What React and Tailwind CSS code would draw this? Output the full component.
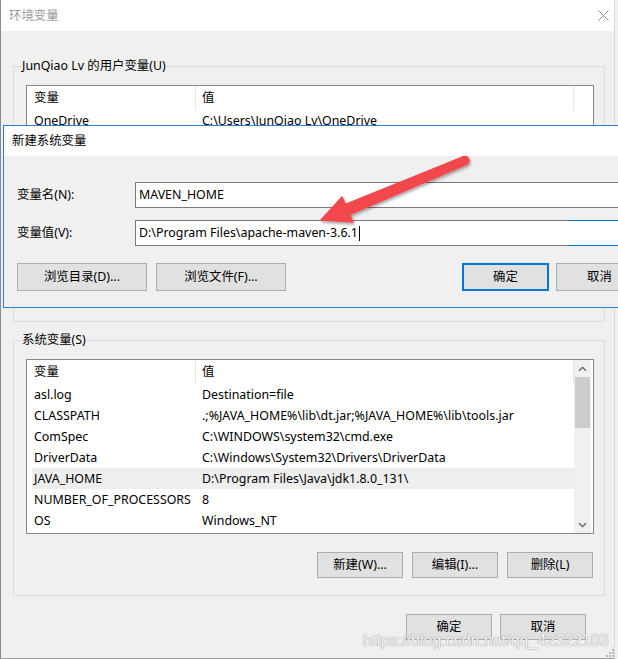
import React from "react";

const userVars = [
  ["OneDrive", "C:\\Users\\JunQiao Lv\\OneDrive"],
  ["Path", "C:\\Users\\JunQiao Lv\\AppData\\Local\\Microsoft\\WindowsApps;"],
  ["TEMP", "C:\\Users\\JunQiao Lv\\AppData\\Local\\Temp"],
  ["TMP", "C:\\Users\\JunQiao Lv\\AppData\\Local\\Temp"],
];

const sysVars = [
  ["asl.log", "Destination=file"],
  ["CLASSPATH", ".;%JAVA_HOME%\\lib\\dt.jar;%JAVA_HOME%\\lib\\tools.jar"],
  ["ComSpec", "C:\\WINDOWS\\system32\\cmd.exe"],
  ["DriverData", "C:\\Windows\\System32\\Drivers\\DriverData"],
  ["JAVA_HOME", "D:\\Program Files\\Java\\jdk1.8.0_131\\"],
  ["NUMBER_OF_PROCESSORS", "8"],
  ["OS", "Windows_NT"],
];

function Btn({ children, className = "" }) {
  return (
    <button
      type="button"
      className={
        "flex items-center justify-center bg-[#e1e1e1] text-[12.4px] leading-[16px] text-black shrink-0 " +
        className
      }
    >
      {children}
    </button>
  );
}

function Chevron({ down }) {
  return (
    <svg width="9" height="6" viewBox="0 0 9 6">
      <path
        d={down ? "M1 1.2 L4.5 4.6 L8 1.2" : "M1 4.8 L4.5 1.4 L8 4.8"}
        stroke="#606060"
        strokeWidth="1.3"
        fill="none"
      />
    </svg>
  );
}

function Scrollbar() {
  return (
    <div className="w-[17px] bg-[#f0f0f0] flex flex-col shrink-0">
      <div className="h-[17px] flex items-center justify-center shrink-0">
        <Chevron />
      </div>
      <div className="flex-1 px-px">
        <div className="h-[51px] bg-[#cdcdcd]" />
      </div>
      <div className="h-[17px] flex items-center justify-center shrink-0">
        <Chevron down />
      </div>
    </div>
  );
}

function VarList({ rows, selected, scroll }) {
  return (
    <div className="h-[175px] border border-[#828790] bg-white flex pr-[2px] overflow-hidden">
      <div className="flex-1 flex flex-col min-w-0 overflow-hidden">
        <div className="h-[24px] flex shrink-0">
          <div className="w-[169px] border-r border-[#e5e5e5] pl-[7px] flex items-center">变量</div>
          <div className="flex-1 border-r border-[#e5e5e5] pl-[6px] flex items-center">值</div>
        </div>
        {rows.map(([k, v]) => (
          <div
            key={k}
            className={
              "h-[21px] flex items-center ml-[5px] shrink-0 whitespace-nowrap " +
              (k === selected ? "bg-[#eeeeee]" : "")
            }
          >
            <div className="w-[163px] pl-[2px] overflow-hidden shrink-0">{k}</div>
            <div className="pl-[7px]">{v}</div>
          </div>
        ))}
      </div>
      {scroll ? <Scrollbar /> : <div className="w-[17px] shrink-0" />}
    </div>
  );
}

function Group({ title, rows, selected, scroll, className = "" }) {
  return (
    <fieldset
      className={
        "w-[592px] border border-[#dcdcdc] pl-[12px] pr-[10px] pt-[11px] pb-[17px] " + className
      }
    >
      <legend className="-ml-[5px] px-[1px] leading-[16px]">{title}</legend>
      <VarList rows={rows} selected={selected} scroll={scroll} />
      <div className="flex justify-end gap-[9px] mt-[18px] pr-[1px]">
        <Btn className="w-[86px] h-[26px] border border-[#adadad]">新建(W)...</Btn>
        <Btn className="w-[86px] h-[26px] border border-[#adadad]">编辑(I)...</Btn>
        <Btn className="w-[86px] h-[26px] border border-[#adadad]">删除(L)</Btn>
      </div>
    </fieldset>
  );
}

export default function App() {
  return (
    <div className="relative w-[618px] h-[659px] overflow-hidden bg-[#f0f0f0] font-['Noto_Sans','Noto_Sans_CJK_SC',sans-serif] text-[12.4px] leading-[16px] text-black">
      {/* Main window: 环境变量 */}
      <div className="w-[615px] h-[659px] flex flex-col border-l border-r border-b border-l-[#8a8a8a] border-r-[#dadada] border-b-[#9a9a9a]">
        <div className="h-[31px] bg-white flex items-center justify-between pl-[8px] pr-[5px] shrink-0">
          <span className="text-[#9a9a9a]">环境变量</span>
          <svg width="11" height="11" viewBox="0 0 11 11">
            <path d="M0.5 0.5 L10.5 10.5 M10.5 0.5 L0.5 10.5" stroke="#8c8c8c" strokeWidth="1" />
          </svg>
        </div>
        <div className="flex flex-col pl-[12px]">
          <Group title="JunQiao Lv 的用户变量(U)" rows={userVars} className="mt-[27px]" />
          <Group
            title="系统变量(S)"
            rows={sysVars}
            selected="JAVA_HOME"
            scroll
            className="mt-[10px]"
          />
          <div className="flex justify-end gap-[8px] pr-[28px] mt-[18px]">
            <Btn className="w-[86px] h-[26px] border border-[#adadad]">确定</Btn>
            <Btn className="w-[86px] h-[26px] border border-[#adadad]">取消</Btn>
          </div>
        </div>
      </div>

      {/* Dialog window: 新建系统变量 */}
      <div className="absolute left-[3px] top-[125px] w-[653px] border border-[#2b80d2] bg-[#f0f0f0] flex flex-col">
        <div className="h-[30px] bg-white flex items-center pl-[8px]">新建系统变量</div>
        <div className="flex flex-col pl-[13px] pr-[12px] pt-[26px] pb-[16px]">
          <div className="flex items-center h-[26px]">
            <div className="w-[118px] shrink-0">变量名(N):</div>
            <div className="flex-1 h-[26px] border border-[#7a7a7a] bg-white flex items-center pl-[3px]">
              MAVEN_HOME
            </div>
          </div>
          <div className="flex items-center h-[26px] mt-[12px]">
            <div className="w-[118px] shrink-0">变量值(V):</div>
            <div className="relative flex-1 h-[26px] border border-[#7a7a7a] bg-white flex items-center pl-[3px]">
              <span>D:\Program Files\apache-maven-3.6.1</span>
              <span className="inline-block w-px h-[15px] bg-black ml-px" />
              <div className="absolute -top-px -bottom-px left-[432px] -right-px border-y border-r border-[#0078d7]" />
            </div>
          </div>
          <div className="flex mt-[17px] h-[28px]">
            <Btn className="w-[130px] h-[28px] border border-[#adadad]">浏览目录(D)...</Btn>
            <Btn className="w-[130px] h-[28px] border border-[#adadad] ml-[9px]">浏览文件(F)...</Btn>
            <div className="flex-1" />
            <Btn className="w-[87px] h-[28px] border-2 border-[#0078d7]">确定</Btn>
            <Btn className="w-[87px] h-[28px] border border-[#adadad] ml-[7px]">取消</Btn>
          </div>
        </div>
      </div>

      {/* Red annotation arrow */}
      <svg className="absolute left-0 top-0 pointer-events-none" width="618" height="659">
        <defs>
          <filter id="sh" x="-20%" y="-20%" width="140%" height="140%">
            <feDropShadow dx="1" dy="2" stdDeviation="1.5" floodColor="#000" floodOpacity="0.35" />
          </filter>
        </defs>
        <g filter="url(#sh)" fill="#f2474d" stroke="#f2474d" strokeLinejoin="round" strokeWidth="1.5">
          <path d="M463.5 156.8 L345.4 204.4 L342 197 L321 220 L353 222 L349.6 214.6 L466.5 164.2 Z" />
          <circle cx="465" cy="160.5" r="4" />
        </g>
      </svg>

      {/* size grip */}
      <svg className="absolute left-[605px] top-[648px]" width="10" height="10" viewBox="0 0 10 10">
        <rect x="7" y="1" width="2" height="2" fill="#b9b9b9" />
        <rect x="4" y="4" width="2" height="2" fill="#b9b9b9" />
        <rect x="7" y="4" width="2" height="2" fill="#b9b9b9" />
        <rect x="1" y="7" width="2" height="2" fill="#b9b9b9" />
        <rect x="4" y="7" width="2" height="2" fill="#b9b9b9" />
        <rect x="7" y="7" width="2" height="2" fill="#b9b9b9" />
      </svg>

      {/* watermark */}
      <div className="absolute left-[363px] top-[633px] font-['Liberation_Sans',sans-serif] text-[16px] leading-none text-[#f4f4f4] whitespace-nowrap [text-shadow:0_0_1px_#9a9a9a,0_0_1px_#9a9a9a] pointer-events-none">
        https://blog.csdn.net/qq_42322103
      </div>
    </div>
  );
}
